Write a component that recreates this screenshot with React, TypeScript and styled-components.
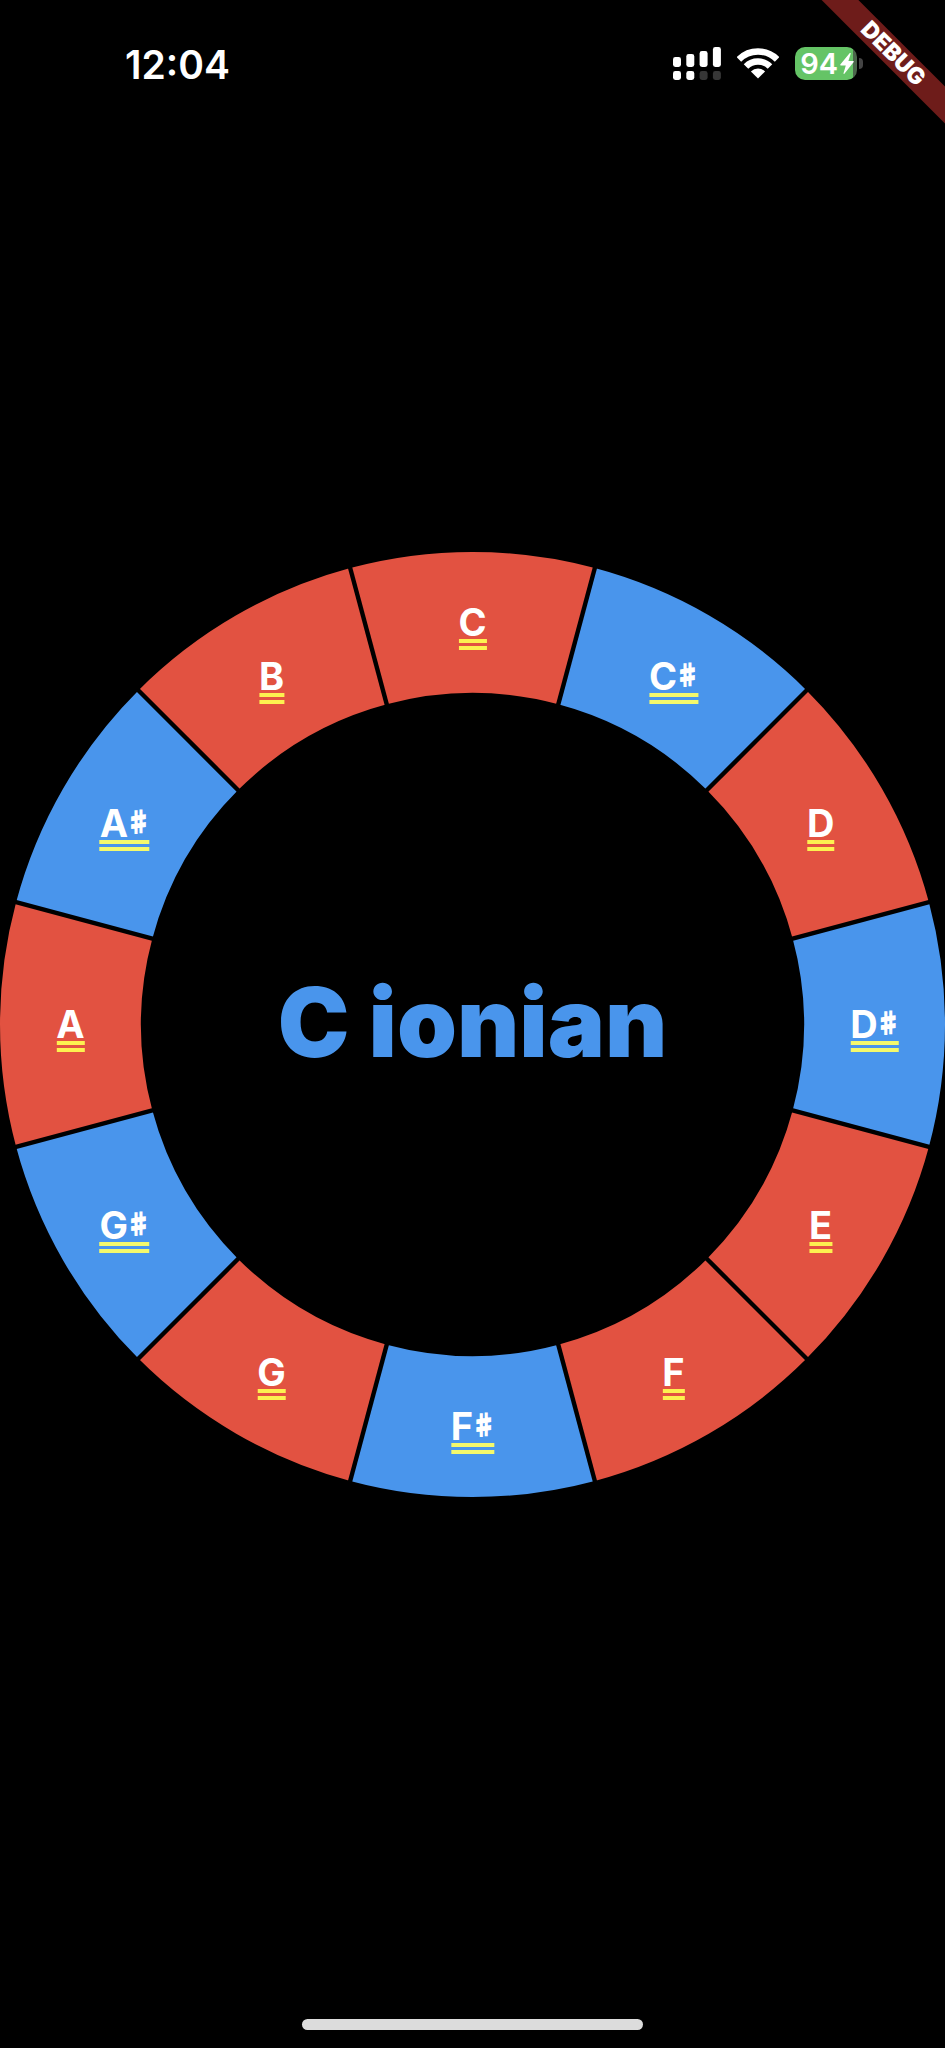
import React, { useState } from 'react';
import styled, { createGlobalStyle } from 'styled-components';

const GlobalStyle = createGlobalStyle`
  *, *::before, *::after {
    box-sizing: border-box;
  }
  body {
    margin: 0;
    background: #000;
    color: #fff;
    font-family: Inter, "Liberation Sans", sans-serif;
  }
`;

const RED = '#e25241';
const BLUE = '#4995ec';

const Screen = styled.div`
  position: relative;
  display: grid;
  grid-template-columns: minmax(0, 1fr);
  grid-template-rows: 1fr auto 1fr;
  min-height: 100vh;
  background: #000;
`;

const StatusBar = styled.header`
  display: flex;
  align-items: center;
  justify-content: space-between;
  align-self: start;
  height: 127px;
  padding: 0 82px 0 125px;
`;

const Clock = styled.time`
  padding-top: 2px;
  font-size: 39px;
  line-height: 48px;
  font-weight: 600;
`;

const Indicators = styled.div`
  display: flex;
  align-items: center;
  gap: 16px;
`;

const Battery = styled.div`
  display: flex;
  align-items: center;
  gap: 2px;
`;

const BatteryBody = styled.div`
  display: flex;
  align-items: center;
  justify-content: flex-end;
  gap: 2px;
  width: 62px;
  height: 33px;
  padding-right: 3px;
  border-radius: 10px;
  background: linear-gradient(90deg, #65c466 94%, #4b664b 94%);
  font-size: 29px;
  line-height: 33px;
  font-weight: 600;
`;

const BatteryTip = styled.div`
  width: 4px;
  height: 11px;
  border-radius: 0 4px 4px 0;
  background: #444;
`;

const BannerCorner = styled.div`
  position: absolute;
  top: 0;
  right: 0;
  width: 124px;
  height: 124px;
  overflow: hidden;
`;

const Banner = styled.div`
  position: absolute;
  top: 39px;
  right: -47px;
  width: 200px;
  height: 26px;
  padding-left: 4px;
  background: #6e1c1a;
  transform: rotate(45deg);
  font-size: 23px;
  line-height: 26px;
  font-weight: 900;
  text-align: center;
`;

const Wheel = styled.main`
  position: relative;
  display: grid;
  place-items: center;
  width: 100%;
  aspect-ratio: 1;
`;

const Ring = styled.svg`
  position: absolute;
  inset: 0;
  width: 100%;
  height: 100%;
`;

const ScaleName = styled.h1`
  position: relative;
  margin: 0;
  padding-bottom: 4px;
  font-size: 96px;
  line-height: 112px;
  font-weight: 900;
  color: ${BLUE};
`;

const NoteLabel = styled.button<{ $x: number; $y: number; $sharp: boolean }>`
  position: absolute;
  left: ${(p) => p.$x}%;
  top: ${(p) => p.$y}%;
  transform: translate(-50%, -16px);
  height: 44px;
  padding: 0;
  border: 0;
  border-bottom: 11px double ${(p) => (p.$sharp ? '#f4f96c' : '#fdf150')};
  background: none;
  color: #fff;
  font-family: inherit;
  font-size: 38px;
  line-height: 33px;
  font-weight: 700;
  white-space: nowrap;
  cursor: pointer;
`;

const Accidental = styled.span`
  display: inline-block;
  margin: 0 -2px 0 -2px;
  font-family: "Noto Sans CJK JP", sans-serif;
  font-size: 25px;
  line-height: 24px;
  vertical-align: 6px;
  -webkit-text-stroke: 2px #fff;
`;

const HomeArea = styled.footer`
  display: flex;
  justify-content: center;
  align-self: end;
  padding-bottom: 18px;
`;

const HomeIndicator = styled.div`
  width: 36%;
  height: 11px;
  border-radius: 6px;
  background: #dcdcdc;
`;

const NOTES = ['C', 'C♯', 'D', 'D♯', 'E', 'F', 'F♯', 'G', 'G♯', 'A', 'A♯', 'B'];

const OUTER = 472.5;
const INNER = 331.5;
const MIDDLE = (OUTER + INNER) / 2;

const point = (radius: number, degrees: number) => {
  const a = ((degrees - 90) * Math.PI) / 180;
  return [OUTER + radius * Math.cos(a), OUTER + radius * Math.sin(a)];
};

const segmentPath = (index: number) => {
  const from = index * 30 - 15;
  const to = from + 30;
  const [a, b, c, d] = [point(OUTER, from), point(OUTER, to), point(INNER, to), point(INNER, from)];
  return `M${a} A${OUTER} ${OUTER} 0 0 1 ${b} L${c} A${INNER} ${INNER} 0 0 0 ${d} Z`;
};

const SIGNAL = [
  { top: 10, height: 10, lit: true },
  { top: 7, height: 13, lit: true },
  { top: 4, height: 16, lit: false },
  { top: 0, height: 20, lit: false },
];

function SignalIcon() {
  return (
    <svg width="48" height="33" viewBox="0 0 48 33" role="img" aria-label="Signal">
      {SIGNAL.map((bar, i) => (
        <g key={i}>
          <rect x={i * 13.3} y={bar.top} width="8" height={bar.height} rx="2.4" fill="#fff" />
          <rect x={i * 13.3} y="24" width="8" height="9" rx="2.4" fill={bar.lit ? '#fff' : '#363636'} />
        </g>
      ))}
    </svg>
  );
}

function WifiIcon() {
  return (
    <svg width="42" height="31" viewBox="0 0 42 31" fill="none" stroke="#fff" strokeWidth="6.4" role="img" aria-label="Wi-Fi">
      <path d="M1.9 11.4A27 27 0 0 1 40.1 11.4" />
      <path d="M9 18.5A17 17 0 0 1 33 18.5" />
      <path d="M21 30.5L13.9 23.4A10 10 0 0 1 28.1 23.4Z" fill="#fff" stroke="none" />
    </svg>
  );
}

function BoltIcon() {
  return (
    <svg width="14" height="21" viewBox="0 0 14 21" fill="#fff" aria-hidden="true">
      <path d="M9.8 0L0.3 11.6Q0 12.3 0.8 12.4H5.8L3.5 20.2Q3.5 21.3 4.4 20.7L13.7 9Q14 8.2 13.2 8.1H8.4L10.8 0.6Q10.7 -0.5 9.8 0Z" />
    </svg>
  );
}

export default function App() {
  const [root, setRoot] = useState('C');

  return (
    <>
      <GlobalStyle />
      <Screen>
        <StatusBar>
          <Clock>12:04</Clock>
          <Indicators>
            <SignalIcon />
            <WifiIcon />
            <Battery>
              <BatteryBody>
                <span>94</span>
                <BoltIcon />
              </BatteryBody>
              <BatteryTip />
            </Battery>
          </Indicators>
        </StatusBar>

        <Wheel>
          <Ring viewBox="0 0 945 945" aria-hidden="true">
            {NOTES.map((note, i) => (
              <path key={note} d={segmentPath(i)} fill={note.length > 1 ? BLUE : RED} />
            ))}
            {NOTES.map((note, i) => {
              const [x1, y1] = point(INNER - 3, i * 30 + 15);
              const [x2, y2] = point(OUTER + 3, i * 30 + 15);
              return <line key={note} x1={x1} y1={y1} x2={x2} y2={y2} stroke="#000" strokeWidth="4.4" />;
            })}
          </Ring>
          {NOTES.map((note, i) => {
            const [x, y] = point(MIDDLE, i * 30);
            return (
              <NoteLabel
                key={note}
                type="button"
                $x={(x / 945) * 100}
                $y={(y / 945) * 100}
                $sharp={note.length > 1}
                onClick={() => setRoot(note)}
              >
                {note[0]}
                {note.length > 1 && <Accidental>♯</Accidental>}
              </NoteLabel>
            );
          })}
          <ScaleName>{root} ionian</ScaleName>
        </Wheel>

        <HomeArea>
          <HomeIndicator />
        </HomeArea>

        <BannerCorner>
          <Banner>DEBUG</Banner>
        </BannerCorner>
      </Screen>
    </>
  );
}
